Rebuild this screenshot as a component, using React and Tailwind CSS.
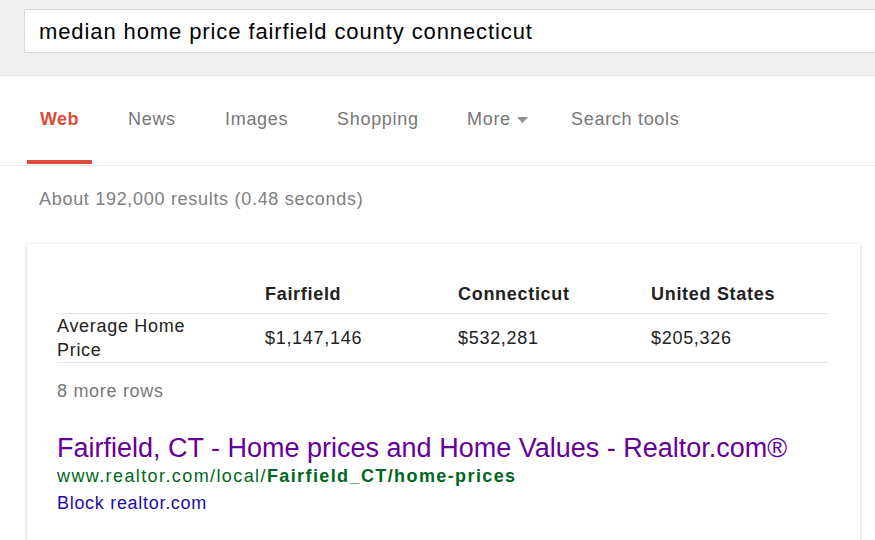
import React from 'react';

const tabs = [
  { label: 'News', w: 'w-[97px]' },
  { label: 'Images', w: 'w-[112px]' },
  { label: 'Shopping', w: 'w-[130px]' },
];

const rows = [
  { label: 'Average Home Price', values: ['$1,147,146', '$532,281', '$205,326'] },
];

export default function App() {
  return (
    <div className="w-[875px] h-[540px] overflow-hidden bg-white font-['Liberation_Sans',Arial,sans-serif]">
      {/* search bar */}
      <div className="h-[76px] bg-[#f1f1f1] border-b border-[#e5e5e5] pt-[9px] pl-[24px]">
        <div className="h-[44px] bg-white border border-[#d9d9d9] border-r-0 flex items-center pl-[14px] text-[22px] tracking-[0.9px] text-black">
          median home price fairfield county connecticut
        </div>
      </div>

      {/* tabs */}
      <div className="h-[90px] border-b border-[#ebebeb] flex items-end pl-[27px]">
        <div className="flex items-end text-[18px] tracking-[0.7px] text-[#777]">
          <div className="w-[65px] h-[89px] flex flex-col justify-end items-center">
            <span className="font-bold text-[#dd4b39] mb-[27px] tracking-[0.5px]">Web</span>
            <div className="w-full h-[4px] bg-[#dd4b39] mb-[1px]" />
          </div>
          <div className="w-[36px]" />
          {tabs.map((t) => (
            <span key={t.label} className={`${t.w} mb-[32px]`}>{t.label}</span>
          ))}
          <span className="w-[104px] mb-[32px] flex items-center">
            More
            <svg width="11" height="6" viewBox="0 0 11 6" className="ml-[6px] mt-[1px]">
              <path d="M0 0h11L5.5 6z" fill="#909090" />
            </svg>
          </span>
          <span className="mb-[32px]">Search tools</span>
        </div>
      </div>

      <div className="pl-[39px] pt-[21px] text-[18px] tracking-[0.7px] text-[#808080] leading-[24px]">
        About 192,000 results (0.48 seconds)
      </div>

      {/* answer card */}
      <div className="ml-[27px] mt-[33px] w-[833px] h-[320px] bg-white shadow-[0_1px_4px_rgba(0,0,0,0.2)] pt-[38px] px-[30px]">
        <table className="w-[772px] text-[18px] tracking-[0.7px] text-[#222] leading-[24px] border-collapse">
          <thead>
            <tr className="border-b border-[#e5e5e5]">
              <th className="w-[208px]" />
              <th className="w-[193px] text-left font-bold pb-[7px]">Fairfield</th>
              <th className="w-[193px] text-left font-bold pb-[7px]">Connecticut</th>
              <th className="text-left font-bold pb-[7px]">United States</th>
            </tr>
          </thead>
          <tbody>
            {rows.map((r) => (
              <tr key={r.label} className="border-b border-[#e5e5e5]">
                <td className="pr-[60px]">{r.label}</td>
                {r.values.map((v) => (
                  <td key={v}>{v}</td>
                ))}
              </tr>
            ))}
          </tbody>
        </table>
        <div className="text-[18px] tracking-[0.7px] text-[#777] mt-[16px] leading-[24px]">8 more rows</div>

        <div className="mt-[30px] text-[27px] leading-[30px] text-[#660099]">
          Fairfield, CT - Home prices and Home Values - Realtor.com®
        </div>
        <div className="text-[18px] tracking-[1.4px] leading-[26px] text-[#006621]">
          www.realtor.com/local/<b>Fairfield_CT/home-prices</b>
        </div>
        <div className="text-[18px] tracking-[0.7px] leading-[28px] text-[#1a0dab]">Block realtor.com</div>
      </div>
    </div>
  );
}
